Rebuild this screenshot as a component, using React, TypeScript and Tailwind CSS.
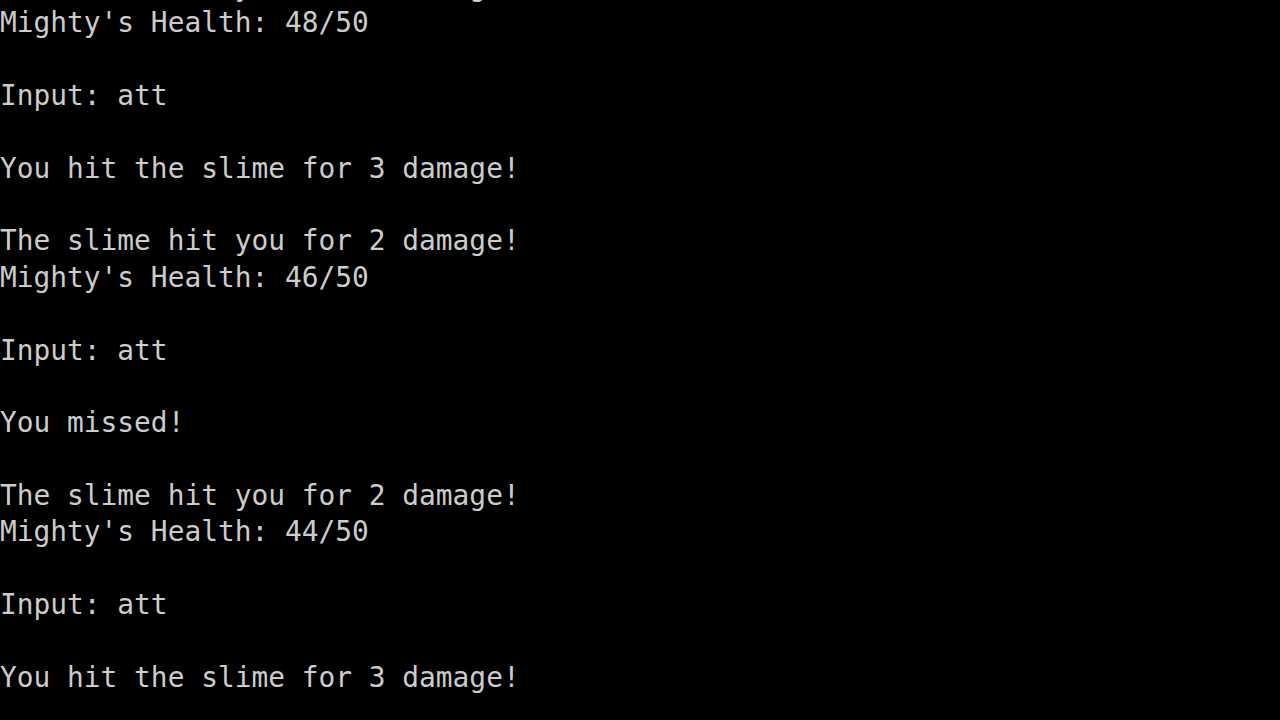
const lines = [
  "The slime hit you for 2 damage!",
  "Mighty's Health: 48/50",
  "",
  "Input: att",
  "",
  "You hit the slime for 3 damage!",
  "",
  "The slime hit you for 2 damage!",
  "Mighty's Health: 46/50",
  "",
  "Input: att",
  "",
  "You missed!",
  "",
  "The slime hit you for 2 damage!",
  "Mighty's Health: 44/50",
  "",
  "Input: att",
  "",
  "You hit the slime for 3 damage!",
  "",
];

export default function App() {
  return (
    <div className="w-[1280px] h-[720px] overflow-hidden bg-black">
      <div
        className="mt-[-31.4px] text-[#cccccc] text-[27.85px] leading-[36.4px] whitespace-pre"
        style={{ fontFamily: '"DejaVu Sans Mono", "Liberation Mono", monospace' }}
      >
        {lines.map((l, i) => (
          <div key={i} className="h-[36.4px]">
            {l}
          </div>
        ))}
      </div>
    </div>
  );
}
